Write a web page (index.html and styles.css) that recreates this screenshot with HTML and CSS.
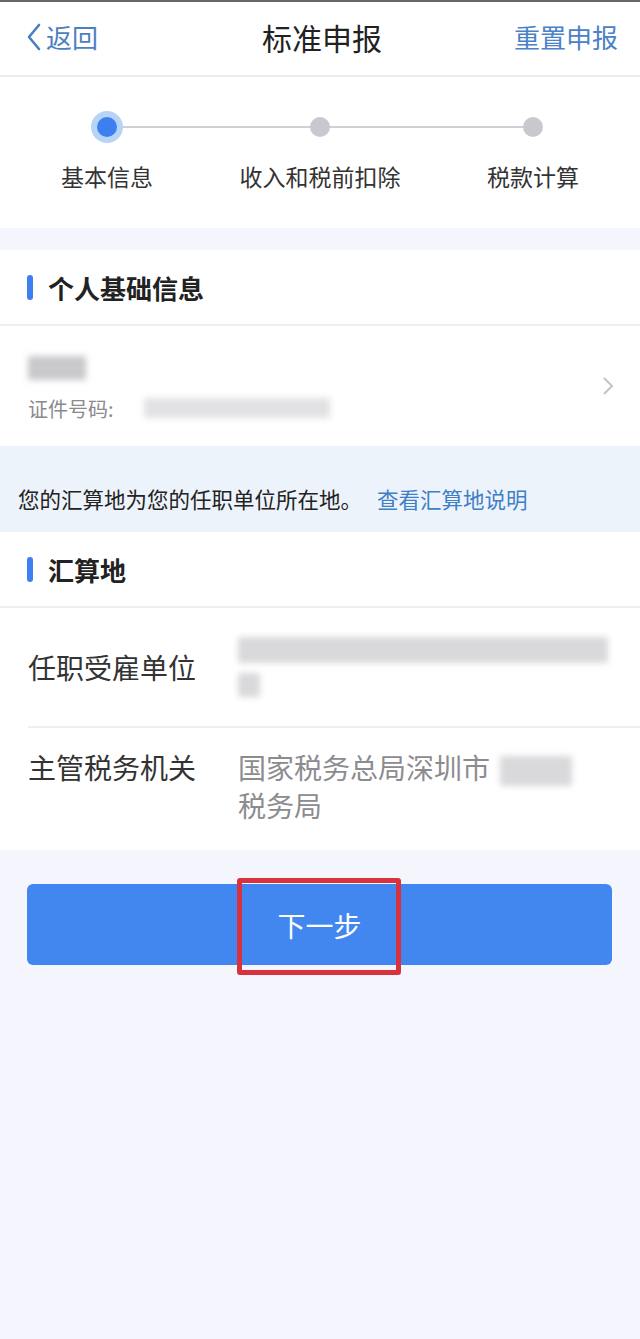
FILE: index.html
```html
<!DOCTYPE html>
<html lang="zh-CN">
<head>
    <meta charset="UTF-8">
    <meta name="viewport" content="width=device-width, initial-scale=1.0">
    <title>标准申报</title>
    <link rel="stylesheet" href="styles.css">
</head>
<body>
    <div class="top-line"></div>
    <div class="nav-bar">
        <a class="nav-back">
            <svg width="16" height="28" viewBox="0 0 16 28"><path d="M13 2 L3 14 L13 26" fill="none" stroke="#4a7fc4" stroke-width="2.6" stroke-linecap="round" stroke-linejoin="round"/></svg>
            <span>返回</span>
        </a>
        <div class="nav-title">标准申报</div>
        <a class="nav-reset">重置申报</a>
    </div>

    <div class="steps">
        <div class="step-track">
            <div class="step-line"></div>
            <span class="dot dot-active"></span>
            <span class="dot"></span>
            <span class="dot"></span>
        </div>
        <div class="step-labels">
            <span>基本信息</span>
            <span>收入和税前扣除</span>
            <span>税款计算</span>
        </div>
    </div>

    <div class="section">
        <div class="section-head"><span class="bar"></span>个人基础信息</div>
        <div class="person-row">
            <div class="person-info">
                <div class="blur blur-name"></div>
                <div class="id-line">证件号码:<span class="blur blur-id"></span></div>
            </div>
            <svg class="chevron" width="12" height="20" viewBox="0 0 12 20"><path d="M2 2 L10 10 L2 18" fill="none" stroke="#c4c4c8" stroke-width="2"/></svg>
        </div>
    </div>

    <div class="notice">您的汇算地为您的任职单位所在地。<a class="notice-link">查看汇算地说明</a></div>

    <div class="section">
        <div class="section-head"><span class="bar"></span>汇算地</div>
        <div class="field-row field-row-unit">
            <div class="field-label">任职受雇单位</div>
            <div class="field-value">
                <div class="blur blur-unit"></div>
                <div class="blur blur-unit2"></div>
            </div>
        </div>
        <div class="field-row field-row-last">
            <div class="field-label">主管税务机关</div>
            <div class="field-value">国家税务总局深圳市<span class="blur blur-city"></span><br>税务局</div>
        </div>
    </div>

    <div class="actions">
        <div class="next-btn">下一步</div>
        <div class="next-mark"></div>
    </div>
</body>
</html>
```

FILE: styles.css
```css
html {
    background-color: #f5f5fd;
}
body {
    margin: 0;
    min-height: 100vh;
    background-color: #f5f5fd;
    font-family: "Noto Sans CJK SC", "Noto Sans", sans-serif;
    color: #333;
}
.top-line {
    height: 2px;
    background-color: #666;
}
.nav-bar {
    display: flex;
    align-items: center;
    justify-content: space-between;
    height: 75px;
    padding: 0 22px 4px 26px;
    box-sizing: border-box;
    background-color: #fff;
    border-bottom: 2px solid #ececf0;
}
.nav-back {
    display: flex;
    align-items: center;
    gap: 4px;
    color: #4a7fc4;
    font-size: 26px;
    width: 104px;
}
.nav-title {
    font-size: 30px;
    color: #222;
}
.nav-reset {
    color: #4a82c8;
    font-size: 26px;
    width: 104px;
    text-align: right;
}
.steps {
    background-color: #fff;
    height: 151px;
    margin-bottom: 22px;
}
.step-track {
    position: relative;
    display: flex;
    justify-content: space-between;
    align-items: center;
    padding: 0 97px;
    height: 100px;
}
.step-line {
    position: absolute;
    left: 107px;
    right: 107px;
    top: 49px;
    height: 2px;
    background-color: #cfcfd4;
}
.dot {
    position: relative;
    width: 20px;
    height: 20px;
    border-radius: 50%;
    background-color: #c8c8cf;
}
.dot-active {
    background-color: #3d7ef0;
    box-shadow: 0 0 0 6px #b7d3f6;
}
.step-labels {
    display: flex;
    justify-content: space-between;
    padding: 0 61px 0 61px;
    font-size: 23px;
    color: #333;
    margin-top: -18px;
}
.section {
    background-color: #fff;
}
.section-head {
    display: flex;
    align-items: center;
    height: 76px;
    padding-left: 27px;
    font-size: 26px;
    font-weight: bold;
    color: #222;
    border-bottom: 2px solid #efeff2;
    box-sizing: border-box;
}
.bar {
    width: 6px;
    height: 25px;
    border-radius: 3px;
    background-color: #3d7ef0;
    margin-right: 15px;
}
.person-row {
    display: flex;
    align-items: center;
    justify-content: space-between;
    height: 120px;
    padding: 0 26px 0 28px;
}
.person-info {
    padding-top: 6px;
}
.blur {
    display: inline-block;
    background-color: #d9d9db;
    filter: blur(3px);
}
.blur-name {
    display: block;
    width: 58px;
    height: 24px;
    background-color: #c9c9cb;
    margin-bottom: 14px;
}
.id-line {
    display: flex;
    align-items: center;
    font-size: 20px;
    color: #8a8a8e;
}
.blur-id {
    width: 186px;
    height: 20px;
    margin-left: 30px;
    background-color: #e2e2e4;
}
.notice {
    background-color: #edf3fb;
    height: 86px;
    line-height: 22px;
    padding: 42px 0 0 18px;
    box-sizing: border-box;
    font-size: 21.5px;
    color: #222;
}
.notice-link {
    color: #3f7fc6;
    margin-left: 15px;
}
.field-row {
    display: flex;
    align-items: flex-start;
    height: 120px;
    margin-left: 28px;
    border-bottom: 2px solid #efeff2;
    box-sizing: border-box;
}
.field-row-unit {
    align-items: center;
}
.field-row-last {
    border-bottom: none;
    padding-top: 20px;
    height: 122px;
}
.field-label {
    width: 210px;
    font-size: 28px;
    line-height: 38px;
    color: #333;
}
.field-value {
    flex: 1;
    font-size: 28px;
    line-height: 38px;
    color: #8c8c90;
    padding-right: 26px;
}
.blur-unit {
    display: block;
    width: 370px;
    height: 26px;
    margin-bottom: 10px;
}
.blur-unit2 {
    display: block;
    width: 22px;
    height: 24px;
}
.blur-city {
    width: 72px;
    height: 30px;
    margin-left: 10px;
    vertical-align: middle;
}
.actions {
    position: relative;
    padding: 34px 28px 40px 27px;
}
.next-btn {
    display: flex;
    align-items: center;
    justify-content: center;
    height: 81px;
    border-radius: 6px;
    background-color: #4286f0;
    color: #fff;
    font-size: 28px;
}
.next-mark {
    position: absolute;
    left: 237px;
    top: 28px;
    width: 164px;
    height: 97px;
    box-sizing: border-box;
    border: 5px solid #d9323f;
    border-radius: 3px;
}
```
